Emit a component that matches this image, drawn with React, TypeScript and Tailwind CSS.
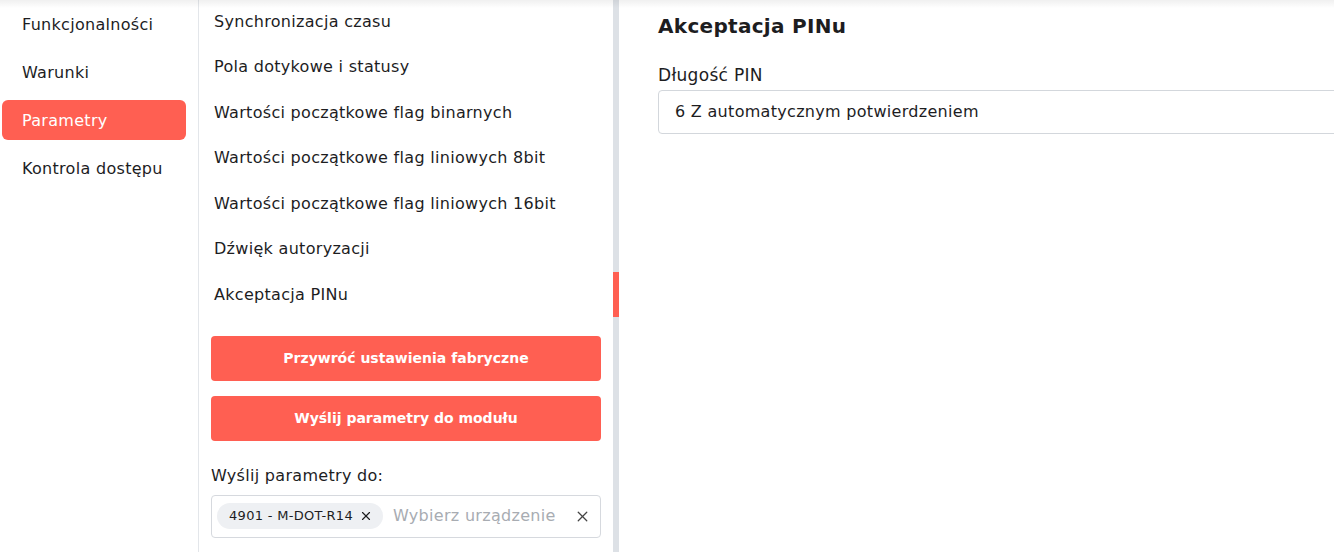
import React from 'react';
import { X } from 'lucide-react';

const menu = ['Funkcjonalności', 'Warunki', 'Parametry', 'Kontrola dostępu'];

const sections = [
  'Synchronizacja czasu',
  'Pola dotykowe i statusy',
  'Wartości początkowe flag binarnych',
  'Wartości początkowe flag liniowych 8bit',
  'Wartości początkowe flag liniowych 16bit',
  'Dźwięk autoryzacji',
  'Akceptacja PINu',
];

export default function App() {
  return (
    <div className="relative flex h-[552px] w-[1334px] overflow-hidden bg-white tracking-[0.3px] text-[#1d1d1f] font-['DejaVu_Sans',sans-serif]">
      <div className="pointer-events-none absolute inset-x-0 top-0 h-2 bg-linear-to-b from-black/[0.06] to-transparent" />

      <aside className="flex w-[199px] shrink-0 flex-col gap-2 border-r border-[#e3e6ea] px-0.5 pt-1">
        {menu.map((item) => (
          <div
            key={item}
            className={
              item === 'Parametry'
                ? 'flex h-10 w-[184px] items-center rounded-md bg-[#ff5f52] px-5 pt-[2px] text-base text-white'
                : 'flex h-10 w-[184px] items-center px-5 pt-[2px] text-base'
            }
          >
            {item}
          </div>
        ))}
      </aside>

      <section className="flex w-[420px] shrink-0">
        <div className="flex flex-1 flex-col px-3">
          <div className="-mt-[1px] flex flex-col">
            {sections.map((s) => (
              <div key={s} className="flex h-[45.5px] items-center px-[3px] text-base">
                {s}
              </div>
            ))}
          </div>

          <button className="mt-[18px] h-[45px] rounded bg-[#ff5f52] text-sm font-bold tracking-normal text-white">
            Przywróć ustawienia fabryczne
          </button>
          <button className="mt-[15px] h-[45px] rounded bg-[#ff5f52] text-sm font-bold tracking-normal text-white">
            Wyślij parametry do modułu
          </button>

          <div className="mt-[23px] text-base leading-6">Wyślij parametry do:</div>
          <div className="mt-[7px] flex h-[43px] items-center rounded border border-[#d6d9de] pl-[5px] pr-[9px]">
            <span className="flex h-[26px] items-center gap-1.5 rounded-full bg-[#eef0f3] pl-3 pr-2.5 text-[13px]">
              4901 - M-DOT-R14
              <X size={14} strokeWidth={2} />
            </span>
            <span className="ml-2.5 flex-1 text-base text-[#a8acb2]">Wybierz urządzenie</span>
            <X size={17} strokeWidth={1.8} className="text-[#444]" />
          </div>
        </div>
        <div className="w-1.5 shrink-0 bg-[#dde1e6]">
          <div className="mt-[272px] h-[45px] bg-[#ff5f52]" />
        </div>
      </section>

      <main className="flex-1 overflow-hidden pl-[39px] pt-[12px]">
        <h1 className="text-xl font-bold leading-7">Akceptacja PINu</h1>
        <div className="mt-[23px] text-[17px] leading-6">Długość PIN</div>
        <div className="mt-[3px] flex h-[44px] w-[720px] items-center rounded border border-[#d3d7dc] px-4 text-base">
          6 Z automatycznym potwierdzeniem
        </div>
      </main>
    </div>
  );
}
